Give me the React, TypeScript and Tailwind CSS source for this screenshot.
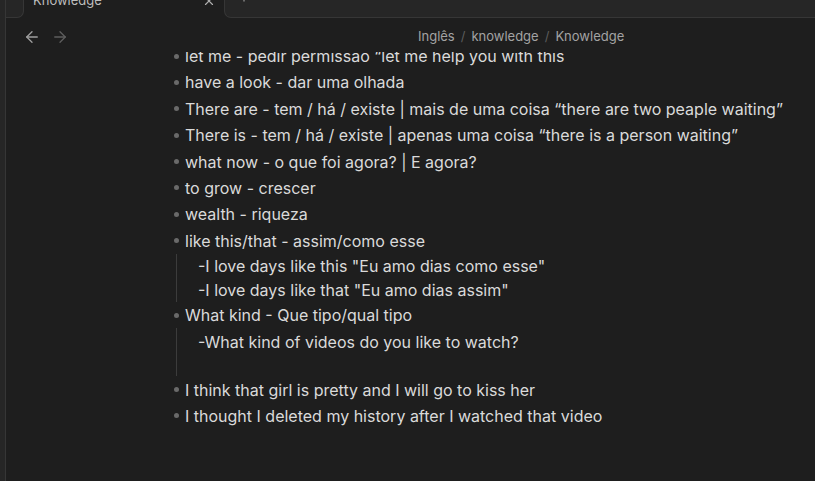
import { ArrowLeft, ArrowRight, Plus, X } from "lucide-react";

// Obsidian-like note view: tab strip, header with breadcrumb, bullet list

const topItems1 = [
  "let me - pedir permissão “let me help you with this",
  "have a look - dar uma olhada",
  "There are - tem / há / existe | mais de uma coisa “there are two peaple waiting”",
  "There is - tem / há / existe | apenas uma coisa “there is a person waiting”",
  "what now - o que foi agora? | E agora?",
  "to grow - crescer",
  "wealth - riqueza",
];

function Item({ text }: { text: string }) {
  return (
    <div className="flex items-center h-[26.4px]">
      <span className="ml-[168px] mr-[6px] w-[5px] h-[5px] rounded-full bg-[#6a6a6a] shrink-0" />
      <span className="whitespace-nowrap">{text}</span>
    </div>
  );
}

export default function App() {
  return (
    <div className="w-[815px] h-[481px] flex overflow-hidden bg-[#1e1e1e] font-['Inter',sans-serif] text-[#dadada]">
      {/* sidebar edge */}
      <div className="w-[6px] shrink-0 bg-[#262626] border-r border-[#363636]" />

      <div className="flex-1 min-w-0 flex flex-col">
        {/* tab strip */}
        <div className="h-[18px] flex shrink-0">
          <div className="w-[18px] bg-[#262626] border-b border-r border-[#363636] rounded-br-[7px]" />
          <div className="w-[200px] bg-[#1e1e1e] flex items-start pl-[9px] pr-[8px] overflow-hidden">
            <span className="text-[13px] leading-[16px] -mt-[8px] text-[#bdbdbd]">Knowledge</span>
            <X size={14} strokeWidth={2} className="ml-auto -mt-[6px] text-[#b0b0b0]" />
          </div>
          <div className="flex-1 bg-[#262626] border-b border-l border-[#363636] rounded-bl-[7px] overflow-hidden">
            <Plus size={14} className="ml-[12px] -mt-[10px] text-[#9a9a9a]" />
          </div>
        </div>

        {/* header */}
        <div className="h-[34px] shrink-0 flex items-center pt-[4px] relative z-10 bg-[#1e1e1e]">
          <ArrowLeft size={18} strokeWidth={1.75} className="ml-[17px] text-[#a0a0a0]" />
          <ArrowRight size={18} strokeWidth={1.75} className="ml-[10px] text-[#5e5e5e]" />
          <div className="ml-[349px] text-[13px] text-[#a3a3a3] whitespace-nowrap flex items-center">
            <span>Inglês</span>
            <span className="mx-[6px] text-[#5c5c5c]">/</span>
            <span>knowledge</span>
            <span className="mx-[6px] text-[#5c5c5c]">/</span>
            <span>Knowledge</span>
          </div>
        </div>

        {/* note body */}
        <div className="flex-1 overflow-hidden text-[16px]">
          <div className="-mt-[9.2px]">
            {topItems1.map((t, i) => (
              <Item key={i} text={t} />
            ))}
            <Item text="like this/that - assim/como esse" />
            <div className="ml-[170px] border-l border-[#3c3c3c] pl-[21px]">
              <div className="h-[24px] leading-[24px] whitespace-nowrap">-I love days like this "Eu amo dias como esse"</div>
              <div className="h-[24px] leading-[24px] whitespace-nowrap">-I love days like that "Eu amo dias assim"</div>
            </div>
            <Item text="What kind - Que tipo/qual tipo" />
            <div className="ml-[170px] border-l border-[#3c3c3c] pl-[21px]">
              <div className="h-[28px] pt-[2px] leading-[24px] whitespace-nowrap">-What kind of videos do you like to watch?</div>
              <div className="h-[20px]" />
            </div>
            <Item text="I think that girl is pretty and I will go to kiss her" />
            <Item text="I thought I deleted my history after I watched that video" />
          </div>
        </div>
      </div>
    </div>
  );
}
